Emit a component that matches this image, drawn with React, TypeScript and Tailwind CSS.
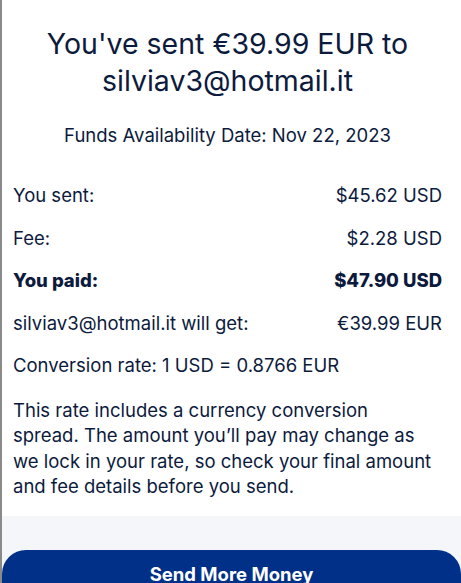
import React from "react";

const rows = [
  { label: "You sent:", value: "$45.62 USD", bold: false },
  { label: "Fee:", value: "$2.28 USD", bold: false },
  { label: "You paid:", value: "$47.90 USD", bold: true },
  { label: "silviav3@hotmail.it will get:", value: "€39.99 EUR", bold: false },
];

export default function App() {
  return (
    <div
      className="h-[583px] w-[461px] overflow-hidden bg-white border-l-2 border-[#8a8a8a] text-[#0c1a3d] flex flex-col"
      style={{ fontFamily: "Inter, 'Noto Sans', sans-serif" }}
    >
      {/* Header */}
      <div className="pt-[25px] pl-[11px] pr-[19px] text-center">
        <h1 className="text-[28.5px] leading-[37px] font-normal">
          You've sent €39.99 EUR to
          <br />
          silviav3@hotmail.it
        </h1>
        <p className="mt-[24px] text-[18.5px] leading-[24px]">Funds Availability Date: Nov 22, 2023</p>
      </div>

      {/* Breakdown */}
      <div className="mt-[28px] pl-[11px] pr-[19px] text-[18.5px]">
        {rows.map((row) => (
          <div
            key={row.label}
            className={`flex items-center justify-between h-[42.5px] ${row.bold ? "font-extrabold" : ""}`}
          >
            <span>{row.label}</span>
            <span>{row.value}</span>
          </div>
        ))}
        <div className="flex items-center h-[42.5px]">Conversion rate: 1 USD = 0.8766 EUR</div>
        <p className="mt-[10px] leading-[25.5px]">
          This rate includes a currency conversion
          <br />
          spread. The amount you’ll pay may change as
          <br />
          we lock in your rate, so check your final amount
          <br />
          and fee details before you send.
        </p>
      </div>

      {/* Footer */}
      <div className="mt-auto h-[67px] bg-[#f5f6f9] pt-[34px]">
        <button className="w-full h-[60px] rounded-t-[24px] bg-[#003087] text-white text-[18.5px] font-bold pb-[10px]">
          Send More Money
        </button>
      </div>
    </div>
  );
}
